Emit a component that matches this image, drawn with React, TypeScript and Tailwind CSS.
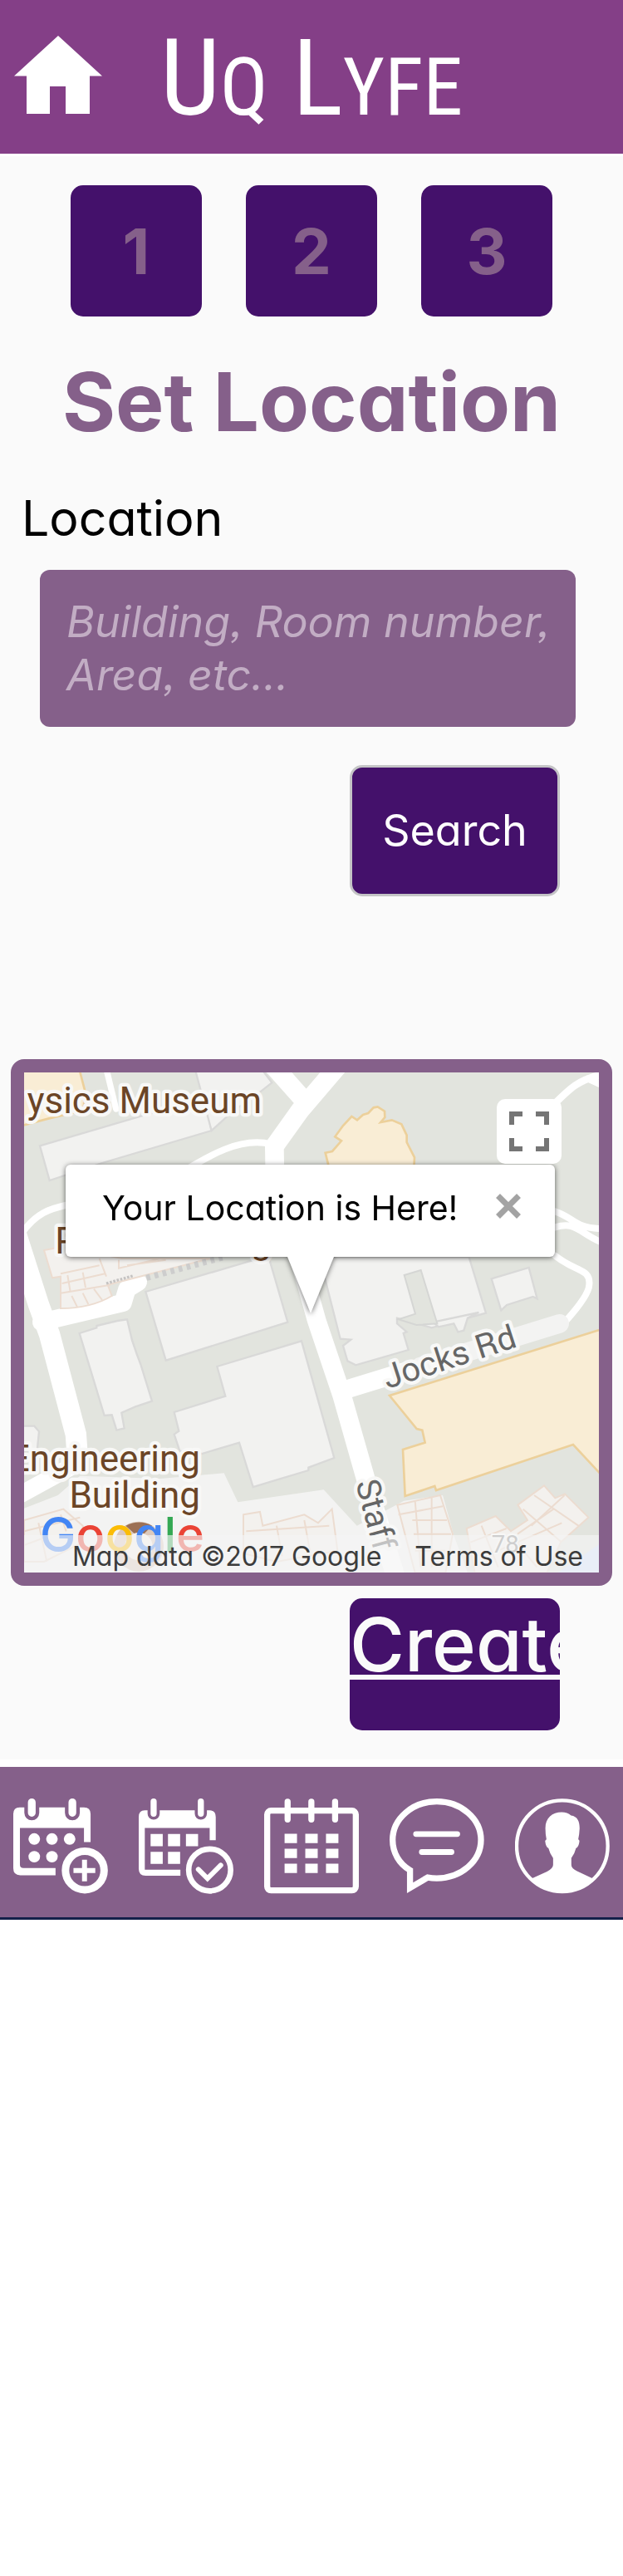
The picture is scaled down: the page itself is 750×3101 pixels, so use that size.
import type { ReactNode } from "react";

const PLUM = "#85608a";
const GEOMETRIC = "font-['Inter',sans-serif] [font-feature-settings:'cv11','ss03']";

function NavLink({ label, viewBox, children }: { label: string; viewBox: string; children: ReactNode }) {
  return (
    <a href="#" aria-label={label} className="block w-[114px]">
      <svg viewBox={viewBox} className="block h-auto w-full" fill="#fff">
        {children}
      </svg>
    </a>
  );
}

function Header() {
  return (
    <header className="flex h-[185px] items-start bg-[#843f87] pl-[17px] text-white">
      <a href="#" aria-label="Home" className="mt-[43px] block w-[106px]">
        <svg viewBox="0 0 106 94" className="block h-auto w-full" fill="#fff">
          <path d="M53 0 106 48.500H91V94H62V61H43V94H15V48.500H0Z" />
        </svg>
      </a>
      <h1 className="ml-[70px] mt-[22px] font-['Roboto_Condensed','Roboto',sans-serif] text-[128px] font-normal uppercase leading-[144px]">
        U<span className="text-[96px]">q</span> L<span className="text-[96px]">yfe</span>
      </h1>
    </header>
  );
}

function Steps() {
  return (
    <ol className="flex justify-center gap-[53px]">
      {[1, 2, 3].map((n) => (
        <li
          key={n}
          className="flex size-[158px] items-center justify-center rounded-[15px] bg-[#44116b] text-[76px] font-bold text-[#85608a]"
        >
          {n}
        </li>
      ))}
    </ol>
  );
}

function MapDrawing() {
  const halo = { stroke: "#f8f8f7", strokeWidth: 26, paintOrder: "stroke", strokeLinejoin: "round" } as const;
  return (
    <svg viewBox="0 0 692 602" className="block h-auto w-full" fontFamily="Roboto, sans-serif">
      <rect width="692" height="602" fill="#e2e4de" />
      <g transform="translate(-16 -21) scale(.33333)">
        {/* pale ground along the southern edge */}
        <path d="M40 1640 170 1590 250 1520 540 1530 770 1510 820 1615 1130 1570 1250 1700 1420 1610 1560 1590 1600 1735 1650 1870H40Z" fill="#f3f3f2" />
        <g fill="#f2f2f0" stroke="#d9d9d8" strokeWidth="7">
          <path d="M105 328 480 218 700 160 725 273 330 390 140 453Z" />
          <path d="M665 50H905L943 100 905 130 800 205 725 273Z" />
          <path d="M487 855 930 725 1000 965 560 1103Z" />
          <path d="M745 1125 1050 1033 1168 1455 1075 1490V1500L875 1560 825 1400 690 1440 610 1430 590 1370 607 1358 590 1290 775 1232Z" />
          <path d="M248 1005 310 985V978L385 960 420 955 438 1030 455 1080 470 1120 510 1250 450 1270 400 1292 410 1348 382 1355 365 1300 338 1302Z" />
          <path d="M40 1340H85L102 1360 95 1430H40Z" />
          <path d="M1115 730H1655L1716 932 1520 985 1395 950V970L1430 1000 1418 1005 1436 1065 1246 1120 1216 1105 1200 1050 1228 1028 1190 1025Z" />
          <path d="M1736 808 1871 768 1901 880 1886 873 1791 903 1771 922Z" />
          <path d="M1525 965 1690 930 1650 950 1636 995 1615 1000 1600 970 1545 982Z" />
        </g>
        <path d="M1421 795 1481 777 1540 970 1465 975 1400 955 1461 935Z" fill="#e2e4de" stroke="#d5d6d4" strokeWidth="6" />
        <g fill="#f9edd5" stroke="#ecd09b" strokeWidth="8">
          <path d="M40 50H247L268 130 262 200 135 230 40 255Z" />
          <path d="M1150 410 1136 353 1161 348 1194 310 1171 295 1200 255 1231 222 1251 235 1272 216 1291 210 1310 190 1325 187 1350 203 1351 225 1336 243 1376 235 1411 250 1430 290V315L1458 370 1456 410Z" />
          <path d="M2150 985 1368 1230 1466 1350 1486 1355 1496 1400 1416 1425 1424 1593 1531 1557 1536 1572 2031 1407 2150 1535Z" />
        </g>
        {/* roads */}
        <g fill="none" stroke="#fff" strokeLinecap="round">
          <path d="M345 50 380 195" strokeWidth="22" />
          <path d="M940 30 1060 165M1190 30 1045 200 952 330 955 520 1040 730 1105 960 1196 1230 1290 1560 1395 1900" strokeWidth="68" strokeLinejoin="round" />
          <path d="M590 440C720 360 830 295 940 322M35 650C90 570 140 555 210 540" strokeWidth="24" />
          <path d="M20 650 100 900 140 1010 235 1370 240 1440" strokeWidth="76" />
          <path d="M240 1475 30 1590" strokeWidth="62" />
          <path d="M110 965 405 895 420 845 460 820" strokeWidth="64" strokeLinejoin="round" />
          <path d="M1960 180C2020 120 2050 90 2130 72M2085 85 2140 110" strokeWidth="26" />
          <path d="M1966 565C2030 585 2040 627 2130 627M1966 622C2040 600 2050 640 2130 675M1966 725C2040 785 2095 770 2089 830C2088 860 2050 910 2005 960" strokeWidth="24" />
          <path d="M1220 1205 1440 1138" strokeWidth="66" />
          <path d="M1480 1125 1982 970" strokeWidth="68" stroke="#f3f3f2" />
        </g>
        {/* floor plans */}
        <g fill="#f3f1ee" stroke="#ecdcd0" strokeWidth="6">
          <path d="M120 705 200 690 400 735 720 735 350 830 365 870Q290 915 180 915V800L150 805Z" />
          <path d="M180 790 320 760M185 825 340 790M180 860 360 830M220 870 240 910M260 860 280 900M300 845 330 885M320 735 345 800M390 740V770L540 735M420 760 560 740M205 795 215 855M260 785 270 840" fill="none" />
          <path d="M48 1680 190 1640 260 1700V1760L120 1830H48ZM48 1720 250 1670M48 1770 130 1740M100 1690 130 1830M180 1660 200 1720" />
          <path d="M840 1660 900 1650 910 1700 1060 1660 1110 1690 1160 1640 1180 1790 960 1830 840 1800ZM850 1720 1150 1700M960 1700 980 1810M1060 1680 1080 1790" />
          <path d="M1396 1625 1551 1590 1596 1730 1570 1870H1460ZM1400 1660 1560 1630M1460 1610 1480 1850M1450 1680H1575M1455 1730H1590M1520 1600V1850M1460 1790H1570" />
          <path d="M1831 1625 1926 1555 1966 1600 2001 1585 2086 1670 1986 1760 1936 1870H1676L1646 1710 1751 1665 1806 1720 1866 1680ZM1850 1640 1990 1760M1890 1590 2050 1700M1880 1700 2000 1590M1700 1700 1760 1850M1810 1740 1900 1850M1830 1730 1960 1640M1660 1760 1790 1710M1760 1790 1990 1690" />
        </g>
        <path d="M490 805 770 730" stroke="#cdcdcd" strokeWidth="22" strokeDasharray="14 16" />
        <path d="M345 825 440 798" stroke="#c5c3c2" strokeWidth="10" strokeDasharray="8 5" />
        <path d="M2150 1750 1960 1880H2150Z" fill="#d3e3fb" />
        <circle cx="462" cy="1775" r="90" fill="#dcc9bc" />
        <path d="M415 1700Q465 1675 510 1700L465 1745Z" fill="#9c7055" />
        <circle cx="462" cy="1775" r="50" fill="#f7f1ec" />

        <g fontSize="132" fill="#6b4526" {...halo}>
          <text x="906" y="210" textAnchor="end">ysics Museum</text>
          <text x="160" y="717">P</text>
          <text x="868" y="717">g</text>
          <text x="684" y="1502" textAnchor="end">Engineering</text>
          <text x="684" y="1634" textAnchor="end">Building</text>
        </g>
        <g fontSize="120" fill="#666" {...halo}>
          <text transform="translate(1360 1206) rotate(-18)">Jocks Rd</text>
          <text transform="translate(1245 1545) rotate(75)">Staff</text>
          <text x="1736" y="1798" fontSize="88" fill="#888" strokeWidth="12">78</text>
        </g>
      </g>
    </svg>
  );
}

function InfoWindow() {
  return (
    <div className="absolute left-[50px] right-[53px] top-[111px] drop-shadow-[0_1px_3px_rgba(0,0,0,0.6)]">
      <div className="flex h-[111px] items-start justify-between rounded-[6px] bg-white pl-[44px] pr-[41px] pt-[28px]">
        <p className="whitespace-nowrap text-[41px] leading-[48px] text-black">Your Location is Here!</p>
        <button type="button" aria-label="Close" className="mt-[7px]">
          <svg viewBox="0 0 30 30" className="block size-[30px]" stroke="#a3a3a3" strokeWidth="7">
            <path d="M2.500 2.500 27.500 27.500M27.500 2.500 2.500 27.500" />
          </svg>
        </button>
      </div>
      <svg viewBox="0 0 56 68" className="mx-auto block w-[56px]" fill="#fff">
        <path d="M0 0H56L28 68Z" />
      </svg>
    </div>
  );
}

function LocationMap() {
  return (
    <section aria-label="Map" className="mx-[13px] rounded-[16px] border-[16px] border-[#85608a]">
      <div className="relative overflow-hidden">
        <MapDrawing />
        <InfoWindow />
        <button
          type="button"
          aria-label="Toggle fullscreen"
          className="absolute right-[45px] top-[32px] flex size-[78px] items-center justify-center rounded-[10px] bg-white"
        >
          <svg viewBox="0 0 48 48" className="size-[48px]" fill="none" stroke="#757575" strokeWidth="6">
            <path d="M3 16V3H16M32 3H45V16M45 32V45H32M16 45H3V32" />
          </svg>
        </button>
        <a href="#" aria-label="Google" className="absolute bottom-[14px] left-[19px] text-[58px] font-medium leading-[64px]">
          <span className="text-[#4285f4]">G</span>
          <span className="text-[#ea4335]">o</span>
          <span className="text-[#fbbc05]">o</span>
          <span className="text-[#4285f4]">g</span>
          <span className="text-[#34a853]">l</span>
          <span className="text-[#ea4335]">e</span>
        </a>
        <div className="absolute inset-x-0 bottom-0 flex h-[45px] items-center justify-end gap-[40px] bg-[#f5f5f5]/65 pr-[19px] pt-[6px] text-[32px] leading-[36px] text-[#3c3c3c]">
          <span className="whitespace-nowrap">Map data ©2017 Google</span>
          <a href="#" className="whitespace-nowrap">Terms of Use</a>
        </div>
      </div>
    </section>
  );
}

function BottomNav() {
  return (
    <nav className="flex items-start justify-between border-b-[3px] border-[#14204a] bg-[#85608a] px-[16px] pb-[28px] pt-[38px]">
      <NavLink label="Add event" viewBox="48 195 343 345">
        <path d="M71 227H304Q328 227 328 251V353H304V302H72V434Q72 447 85 447H201V473H73Q48 473 48 448V251Q48 227 71 227Z" />
        <path d="M115 209V247M262 209V247" stroke={PLUM} strokeWidth="54" strokeLinecap="round" />
        <path d="M115 209V247M262 209V247" stroke="#fff" strokeWidth="28" strokeLinecap="round" />
        <circle cx="124" cy="342" r="21" />
        <circle cx="188" cy="342" r="21" />
        <circle cx="252" cy="342" r="21" />
        <circle cx="124" cy="406" r="21" />
        <circle cx="188" cy="406" r="21" />
        <circle cx="307" cy="456" r="70" fill={PLUM} stroke="#fff" strokeWidth="27" />
        <path d="M306 417V495M266 456H345" stroke="#fff" strokeWidth="18" />
      </NavLink>
      <NavLink label="Attending" viewBox="503 195 343 345">
        <path d="M525 238H760Q782 238 782 262V346H760V302H525V453H654V475H528Q503 475 503 450V262Q503 238 525 238Z" />
        <path d="M557 206V250M728 206V250" stroke={PLUM} strokeWidth="44" strokeLinecap="round" />
        <path d="M557 206V250M728 206V250" stroke="#fff" strokeWidth="22" strokeLinecap="round" />
        <path d="M546 324h44v44h-44zM609 324h44v44h-44zM674 324h44v44h-44zM546 388h44v44h-44zM609 388h44v44h-44z" />
        <circle cx="760" cy="454" r="76" fill={PLUM} stroke="#fff" strokeWidth="20" />
        <path d="M719 452 752 485 800 437" fill="none" stroke="#fff" strokeWidth="18" strokeLinecap="round" />
      </NavLink>
      <NavLink label="Calendar" viewBox="949 195 343 345">
        <rect x="960" y="239" width="321" height="289" rx="14" fill="none" stroke="#fff" strokeWidth="22" />
        <path d="M1034 207V271M1120 207V271M1206 207V271" stroke="#fff" strokeWidth="22" strokeLinecap="round" />
        <path d="M1023 323h45v34h-45zM1098 323h45v34h-45zM1173 323h45v34h-45zM1023 377h45v34h-45zM1098 377h45v34h-45zM1173 377h45v34h-45zM1023 431h45v34h-45zM1098 431h45v34h-45zM1173 431h45v34h-45z" />
      </NavLink>
      <NavLink label="Messages" viewBox="295 195 343 345">
        <path d="M369 455C330 432 306 392 306 345C306 268 378 206 466 206S626 268 626 345S554 484 466 484Q449 484 433 481L369 519Z" fill="none" stroke="#fff" strokeWidth="22" />
        <path d="M391 324H540M412 389H519" stroke="#fff" strokeWidth="21" strokeLinecap="round" />
      </NavLink>
      <NavLink label="Profile" viewBox="750 195 343 345">
        <circle cx="921" cy="367" r="165" fill="none" stroke="#fff" strokeWidth="13" />
        <path d="M808 486 866 460Q888 448 888 436V411Q875 392 871 375Q862 372 859 349Q861 344 864 343Q860 326 860 303C860 265 885 245 919 245Q940 245 953 257C976 260 984 278 984 303Q983 326 979 343Q984 344 983 352Q980 372 971 375Q967 393 954 411V436Q954 449 975 458L1034 486A166 166 0 0 1 808 486Z" />
      </NavLink>
    </nav>
  );
}

export default function App() {
  return (
    <div className={`min-h-screen bg-white ${GEOMETRIC} text-black`}>
      <Header />
      <main className="mt-[3px] bg-[#fafafa] pb-[35px] pt-[35px]">
        <Steps />
        <h2 className="mt-[47px] whitespace-nowrap text-center text-[98px] font-bold leading-[112px] text-[#85608a]">Set Location</h2>
        <form onSubmit={(e) => e.preventDefault()}>
          <label htmlFor="location" className="mt-[52px] block pl-[26px] text-[59px] leading-[64px]">
            Location
          </label>
          <div className="ml-[48px] mr-[57px] mt-[30px]">
            <textarea
              id="location"
              rows={2}
              placeholder="Building, Room number, Area, etc..."
              className="block h-[189px] w-full resize-none overflow-hidden rounded-[12px] bg-[#85608a] pb-[30px] pl-[32px] pr-[20px] pt-[31px] text-[52px] leading-[64px] text-white outline-none placeholder:italic placeholder:text-[#c2adc4]"
            />
          </div>
          <button
            type="submit"
            className="ml-auto mr-[76px] mt-[46px] block h-[158px] w-[253px] rounded-[15px] border-[3px] border-[#c4c4c6] bg-[#44116b] text-[52px] text-white"
          >
            Search
          </button>
        </form>
        <div className="mt-[196px]">
          <LocationMap />
        </div>
        <a
          href="#"
          className="ml-auto mr-[76px] mt-[15px] block h-[159px] w-[253px] overflow-hidden rounded-[15px] bg-[#44116b] text-[90px] font-medium leading-[112px] text-[#fafafa] underline decoration-[6px] underline-offset-[4px] [text-decoration-skip-ink:none]"
        >
          Create
        </a>
      </main>
      <div className="mt-[9px]">
        <BottomNav />
      </div>
    </div>
  );
}
